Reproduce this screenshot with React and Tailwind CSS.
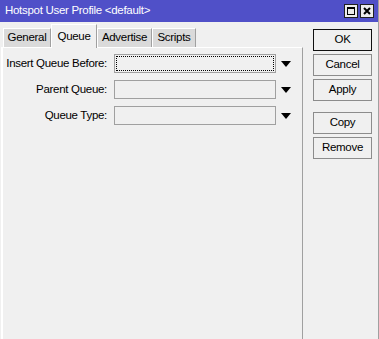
import React from 'react';

function DropArrow() {
  return (
    <svg width="10" height="6" viewBox="0 0 10 6" className="ml-[5px]">
      <polygon points="0,0 10,0 5,6" fill="#000" />
    </svg>
  );
}

function Field({ label, focused }) {
  return (
    <div className="flex items-center h-[19px]">
      <div className="w-[105px] flex justify-end whitespace-nowrap pr-[1px]">{label}</div>
      <div className="ml-[6px] w-[162px] h-[19px] border border-[#a0a0a0] bg-[#f0f0f0] p-[1px]">
        {focused && <div className="w-full h-full border border-dotted border-black" />}
      </div>
      <DropArrow />
    </div>
  );
}

function SideButton({ children, primary }) {
  return (
    <div
      className={
        'w-[59px] h-[22px] flex items-center justify-center bg-[#f0f0f0] border ' +
        (primary ? 'border-[#101010]' : 'border-[#8c8c8c]')
      }
    >
      {children}
    </div>
  );
}

const tabs = [
  { name: 'General', w: 'w-[48px]' },
  { name: 'Queue', w: 'w-[46px]', active: true },
  { name: 'Advertise', w: 'w-[55px]' },
  { name: 'Scripts', w: 'w-[44px]' },
];

export default function App() {
  return (
    <div className="w-[379px] h-[339px] bg-[#f0f0f0] flex flex-col overflow-hidden text-[11.5px] tracking-[-0.3px] text-black font-['Liberation_Sans',Arial,sans-serif] border-r border-[#a0a0a0]">
      {/* Title bar */}
      <div className="h-[22px] bg-[#5050c8] flex items-center pl-[5px] pr-[4px] text-white">
        <span>Hotspot User Profile &lt;default&gt;</span>
        <div className="ml-auto flex gap-[2px]">
          <div className="w-[14px] h-[14px] bg-[#ececec] border border-[#202020] flex items-center justify-center">
            <div className="w-[8px] h-[8px] border border-black border-t-2" />
          </div>
          <div className="w-[14px] h-[14px] bg-[#ececec] border border-[#202020] flex items-center justify-center">
            <svg width="8" height="8" viewBox="0 0 8 8">
              <path d="M1 1 L7 7 M7 1 L1 7" stroke="#000" strokeWidth="2" />
            </svg>
          </div>
        </div>
      </div>

      <div className="flex flex-1">
        {/* Left: tabs + panel */}
        <div className="w-[303px] flex flex-col">
          <div className="h-[25px] flex items-end pl-[3px]">
            {tabs.map((t) =>
              t.active ? (
                <div
                  key={t.name}
                  className={t.w + ' h-[24px] bg-[#f0f0f0] border-t border-l border-white border-r border-r-[#a0a0a0] flex justify-center pt-[3px] -mb-[1px] relative z-10'}
                >
                  {t.name}
                </div>
              ) : (
                <div
                  key={t.name}
                  className={t.w + ' h-[19px] bg-[#dadada] border-t border-l border-white border-r border-r-[#a0a0a0] flex items-center justify-center'}
                >
                  {t.name}
                </div>
              )
            )}
          </div>
          <div className="flex-1 ml-[1px] border-t border-l-2 border-white border-r border-r-[#a0a0a0] flex flex-col gap-[7px] pt-[6px]">
            <Field label="Insert Queue Before:" focused />
            <Field label="Parent Queue:" />
            <Field label="Queue Type:" />
          </div>
        </div>

        {/* Right: buttons */}
        <div className="flex flex-col pl-[10px] pt-[7px]">
          <SideButton primary>OK</SideButton>
          <div className="mt-[3px]"><SideButton>Cancel</SideButton></div>
          <div className="mt-[3px]"><SideButton>Apply</SideButton></div>
          <div className="mt-[11px]"><SideButton>Copy</SideButton></div>
          <div className="mt-[3px]"><SideButton>Remove</SideButton></div>
        </div>
      </div>
    </div>
  );
}
